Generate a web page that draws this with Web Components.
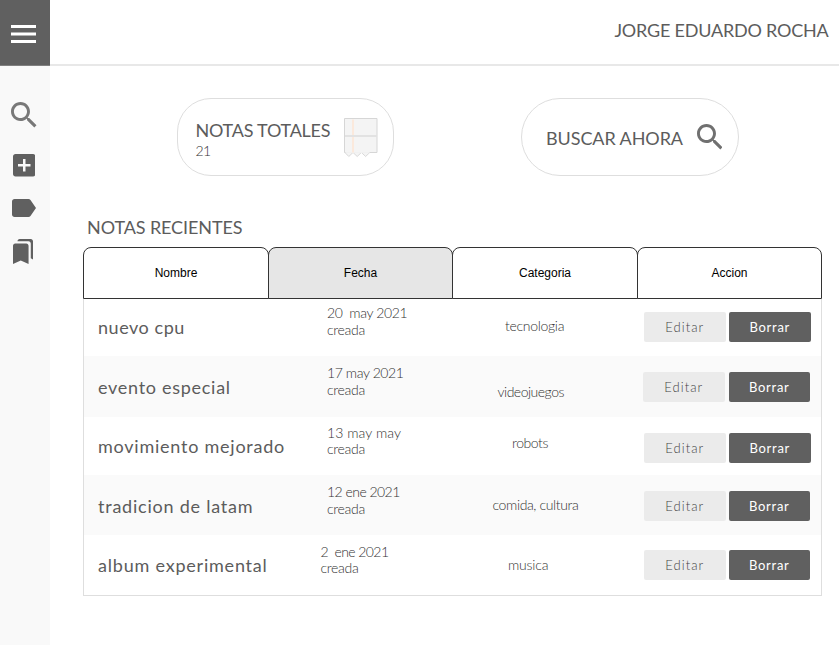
<!DOCTYPE html>
<html lang="es">
<head>
<meta charset="utf-8">
<title>Notas</title>
<style>
html,body{margin:0;padding:0;background:#fff}
body{font-family:Lato,"Liberation Sans",sans-serif;color:#5c5c5c;width:839px;height:645px;overflow:hidden}
</style>
</head>
<body>
<notes-app></notes-app>
<script>
const ICONS = {
  menu: '<path d="M3 6h18v2H3zM3 11.1h18v2H3zM3 16.2h18v2H3z"/>',
  search: '<path d="M15.5 14h-.79l-.28-.27C15.41 12.59 16 11.11 16 9.5 16 5.91 13.09 3 9.5 3S3 5.91 3 9.5 5.91 16 9.5 16c1.61 0 3.09-.59 4.23-1.57l.27.28v.79l5 4.99L20.49 19l-4.99-5zm-6 0C7.01 14 5 11.99 5 9.5S7.01 5 9.5 5 14 7.01 14 9.5 11.99 14 9.5 14z"/>',
  add: '<path d="M19 3H5c-1.11 0-2 .9-2 2v14c0 1.1.89 2 2 2h14c1.1 0 2-.9 2-2V5c0-1.1-.9-2-2-2zm-2 10h-4v4h-2v-4H7v-2h4V7h2v4h4v2z"/>',
  label: '<path d="M17.63 5.84C17.27 5.33 16.67 5 16 5L5 5.01C3.9 5.01 3 5.9 3 7v10c0 1.1.9 1.99 2 1.99L16 19c.67 0 1.27-.33 1.63-.84L22 12l-4.37-6.16z"/>',
  bookmarks: '<path d="M19 18l2 1V3c0-1.1-.9-2-2-2H8.99C7.89 1 7 1.9 7 3h10c1.1 0 2 .9 2 2v13zM15 5H5c-1.1 0-2 .9-2 2v16l7-3 7 3V7c0-1.1-.9-2-2-2z"/>'
};
function define(name, render) {
  customElements.define(name, class extends HTMLElement {
    connectedCallback() {
      if (!this.shadowRoot) this.attachShadow({mode: 'open'}).innerHTML = render(this);
    }
  });
}
define('ui-icon', el => `
<style>:host{display:block;line-height:0}svg{display:block;fill:currentColor}</style>
<svg width="${el.getAttribute('w')}" height="${el.getAttribute('h')}" viewBox="${el.getAttribute('box')}" preserveAspectRatio="none">${ICONS[el.getAttribute('name')]}</svg>`);

define('note-icon', () => `
<style>:host{display:block}svg{display:block}</style>
<svg width="34" height="40" viewBox="0 0 34 40">
<path d="M.8 34.5l4 4 4.2-4 4.2 4 4.2-4 4.2 4 4.2-4" fill="#f4f4f4" stroke="#d0d0d0" stroke-width=".8"/>
<path d="M.5.5h32.5v34H.5z" fill="#f4f4f4" stroke="#d6d6d6"/>
<path d="M1.5 34.5h24" stroke="#f1f1f1" stroke-width="1.2"/>
<path d="M9 1.5v33" stroke="#fbe9dc" stroke-width="2"/>
<path d="M1 18h32" stroke="#e2e2e2" stroke-width="2"/>
</svg>`);

define('side-bar', () => `
<style>
:host{display:flex;flex-direction:column;width:50px;height:645px;background:#f9f9f9;color:#606060}
.top{border-bottom:1px solid #808080;background:#606060;color:#fff;padding:25px 0 0 11px;box-sizing:border-box;height:66px}
nav{display:flex;flex-direction:column;padding:36px 0 0 11px}
.s{color:#787878}
.a{margin:26.5px 0 0 1.5px}.l{margin:22px 0 0 1px}.b{margin:22.5px 0 0 2px}
</style>
<div class="top"><ui-icon name="menu" w="25" h="18" box="3 6 18 12.2"></ui-icon></div>
<nav>
<ui-icon class="s" name="search" w="25.5" h="25.5" box="3 3 17.49 17.49"></ui-icon>
<ui-icon class="a" name="add" w="22.5" h="22.5" box="3 3 18 18"></ui-icon>
<ui-icon class="l" name="label" w="24" h="18" box="3 5 19 14"></ui-icon>
<ui-icon class="b" name="bookmarks" w="20" h="25" box="3 1 18 22"></ui-icon>
</nav>`);

define('top-bar', () => `
<style>:host{display:flex;justify-content:flex-end;height:66px;box-sizing:border-box;border-bottom:2px solid #e8e8e8;padding:19px 10.4px 0 0;font-size:18px;line-height:22px;letter-spacing:-.2px}</style>
<span><slot></slot></span>`);

define('pill-card', () => `
<style>:host{display:flex;box-sizing:border-box;width:217.5px;height:78px;border:1px solid #dedede;background:#fff;font-size:18px;line-height:22px;white-space:nowrap}</style>
<slot></slot>`);

define('tab-head', () => `
<style>
:host{display:flex;align-items:center;justify-content:center;box-sizing:border-box;height:52px;border:1px solid #333;border-radius:8px 8px 0 0;background:#fff;color:#000;font:12px "Liberation Sans",Arial,sans-serif;margin-right:-1px}
:host([active]){background:#e6e6e6}
:host(:last-child){margin-right:0}
</style><slot></slot>`);

define('ui-button', () => `
<style>
:host{display:flex;justify-content:center;box-sizing:border-box;width:81.5px;height:30px;border-radius:2px;background:#ebebeb;color:#444;font-size:13px;line-height:30px;font-weight:300;letter-spacing:1.05px}
:host([dark]){background:#606060;color:#fff;font-weight:400;letter-spacing:.75px}
</style><slot></slot>`);

define('note-row', el => {
  const a = n => el.getAttribute(n);
  return `
<style>
:host{display:grid;grid-template-columns:236px 172px 152px auto;align-items:start;background:#fff;white-space:pre;font-size:14px;line-height:17px;font-weight:300;color:#333}
:host(:nth-of-type(even)){background:#fafafa}
.n{font-size:18px;line-height:22px;font-weight:400;color:#5c5c5c;padding:${a('ny')}px 0 0 14px}
.d{padding:${a('dy')}px 0 0 ${a('dx')}px;letter-spacing:${a('dl')}px}
.d div+div{margin-top:${a('gap')}px;letter-spacing:-.3px}
.c{padding:${a('cy')}px 0 0 ${a('cx')}px;letter-spacing:${a('cl')}px}
.b{display:flex;gap:${a('bg')}px;margin-left:${a('bx')}px}
.b ui-button:first-child{margin-top:${a('ey')}px}
.b ui-button:last-child{margin-top:${a('by')}px}
</style>
<div class="n" style="letter-spacing:${a('nl')}px">${a('name')}</div>
<div class="d"><div>${a('date')}</div><div>creada</div></div>
<div class="c">${a('cat')}</div>
<div class="b"><ui-button>Editar</ui-button><ui-button dark>Borrar</ui-button></div>`;
});

define('notes-table', () => `
<style>
:host{display:block;width:739px}
.heads{display:grid;grid-template-columns:185px 184px 185px 185px;width:739px}
.rows{display:block;box-sizing:border-box;border:1px solid #dedede;border-top:0}
</style>
<div class="heads"><tab-head>Nombre</tab-head><tab-head active>Fecha</tab-head><tab-head>Categoria</tab-head><tab-head>Accion</tab-head></div>
<div class="rows"><slot></slot></div>`);

define('notes-app', () => `
<style>
:host{display:grid;grid-template-columns:50px 789px;width:839px;height:645px;background:#fff}
.cards{display:flex;gap:127px;padding:32px 0 0 126.5px}
.one{border-radius:34px;padding:20px 0 0 18px;gap:13.5px}
.two{border-radius:39px;padding:0 0 0 24px;gap:14px}
.one>div{letter-spacing:-.23px}
.one>note-icon{margin-top:-1px}
.num{font-size:14px;line-height:17px;font-weight:300;margin-top:1px;letter-spacing:-.5px;color:#333}
.two>span{margin-top:28px;letter-spacing:-.08px}
.two>ui-icon{margin-top:25px;color:#707070}
h2{margin:40px 0 9px 37px;font-size:18px;line-height:22px;font-weight:400;letter-spacing:-.1px}
notes-table{margin-left:33px}
</style>
<side-bar></side-bar>
<main>
<top-bar>JORGE EDUARDO ROCHA</top-bar>
<div class="cards">
<pill-card class="one"><div>NOTAS TOTALES<div class="num">21</div></div><note-icon></note-icon></pill-card>
<pill-card class="two"><span>BUSCAR AHORA</span><ui-icon name="search" w="25.5" h="25.5" box="3 3 17.49 17.49"></ui-icon></pill-card>
</div>
<h2>NOTAS RECIENTES</h2>
<notes-table>
<note-row style="height:57px" name="nuevo cpu" nl=".55" ny="17" date="20  may 2021" dx="7" dy="5" dl="-.38" gap="0" cat="tecnologia" cx="13" cy="18" cl="-.3" bx="0" bg="3.5" ey="13" by="13"></note-row>
<note-row style="height:61px" name="evento especial" nl=".72" ny="20" date="17 may 2021" dx="7" dy="8" dl="-.4" gap="0" cat="videojuegos" cx="5.5" cy="27" cl="-.5" bx="-1" bg="4" ey="16" by="16"></note-row>
<note-row style="height:58px" name="movimiento mejorado" nl=".76" ny="18" date="13 may may" dx="7" dy="7" dl=".07" gap="-1" cat="robots" cx="20" cy="17" cl="-.42" bx="0" bg="3.5" ey="16" by="16"></note-row>
<note-row style="height:60px" name="tradicion de latam" nl=".77" ny="20" date="12 ene 2021" dx="7" dy="8" dl="-.53" gap="0" cat="comida, cultura" cx="0.5" cy="21" cl="-.38" bx="0" bg="3" ey="16" by="15.5"></note-row>
<note-row style="height:60px" name="album experimental" nl=".79" ny="19" date="2  ene 2021" dx="0.5" dy="8" dl="-.58" gap="-1" cat="musica" cx="16" cy="21" cl="-.2" bx="0" bg="3" ey="14.5" by="15"></note-row>
</notes-table>
</main>`);
</script>
</body>
</html>
